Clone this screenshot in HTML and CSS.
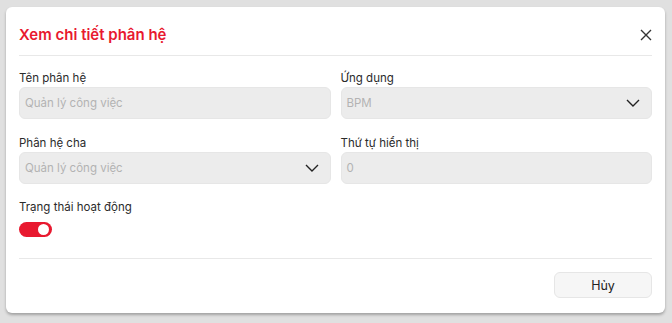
FILE: index.html
```html
<!DOCTYPE html>
<html lang="vi">

<head>
  <meta charset="UTF-8">
  <meta name="viewport" content="width=device-width, initial-scale=1.0">
  <title>Xem chi tiết phân hệ</title>
  <link rel="stylesheet" href="styles.css">
</head>

<body>
  <section class="modal">
    <header class="modal-header">
      <h2 class="modal-title">Xem chi tiết phân hệ</h2>
      <button class="close" aria-label="Đóng">
        <svg width="12" height="12" viewBox="0 0 12 12">
          <path d="M1 1 L11 11 M11 1 L1 11" stroke="#333" stroke-width="1.4" fill="none" />
        </svg>
      </button>
    </header>
    <div class="modal-body">
      <div class="grid">
        <label class="field">
          <span class="field-label">Tên phân hệ</span>
          <span class="input">Quản lý công việc</span>
        </label>
        <label class="field">
          <span class="field-label">Ứng dụng</span>
          <span class="input select">BPM
            <svg width="14" height="8" viewBox="0 0 14 8">
              <path d="M1 1 L7 7 L13 1" stroke="#222" stroke-width="1.4" fill="none" />
            </svg>
          </span>
        </label>
        <label class="field">
          <span class="field-label">Phân hệ cha</span>
          <span class="input select">Quản lý công việc
            <svg width="14" height="8" viewBox="0 0 14 8">
              <path d="M1 1 L7 7 L13 1" stroke="#222" stroke-width="1.4" fill="none" />
            </svg>
          </span>
        </label>
        <label class="field">
          <span class="field-label">Thứ tự hiển thị</span>
          <span class="input">0</span>
        </label>
      </div>
      <div class="status">
        <span class="field-label">Trạng thái hoạt động</span>
        <span class="toggle"><span class="knob"></span></span>
      </div>
    </div>
    <footer class="modal-footer">
      <button class="btn">Hủy</button>
    </footer>
  </section>
</body>

</html>
```
FILE: styles.css
```css
html {
  box-sizing: border-box;
  font-family: Inter, "Noto Sans", sans-serif;
  font-size: 11.5px;
}

*,
*::before,
*::after {
  box-sizing: inherit;
}

body {
  margin: 0;
  padding: 7px 7px 0 6px;
  min-height: 100vh;
  background-color: #e0e0e0;
  color: #2b2b2b;
}

.modal {
  width: 659px;
  background-color: #fff;
  border-radius: 6px;
  box-shadow: 0 2px 3px rgba(0, 0, 0, .28);
  padding: 0 13px 15px;
}

.modal-header {
  display: flex;
  justify-content: space-between;
  align-items: center;
  padding: 16px 0 8px;
  border-bottom: 1px solid #e8e8e8;
}

.modal-title {
  margin: 0;
  font-size: 15px;
  line-height: 24px;
  font-weight: 600;
  color: #e8192f;
}

.close {
  border: 0;
  background: none;
  padding: 0;
  width: 12px;
  height: 12px;
  display: flex;
}

.modal-body {
  padding: 14px 0 21px;
  border-bottom: 1px solid #e8e8e8;
}

.grid {
  display: grid;
  grid-template-columns: 1fr 1fr;
  column-gap: 10px;
  row-gap: 16px;
}

.field {
  display: flex;
  flex-direction: column;
  gap: 1px;
}

.field-label {
  line-height: 16px;
  color: #2b2b2b;
}

.input {
  height: 32px;
  display: flex;
  align-items: center;
  justify-content: space-between;
  padding: 0 11px 0 5px;
  background-color: #ececec;
  border: 1px solid #e6e6e6;
  border-radius: 6px;
  color: #b3b3b3;
  font-size: 11.5px;
}

.status {
  margin-top: 15px;
  display: flex;
  flex-direction: column;
  align-items: flex-start;
  gap: 7px;
}

.toggle {
  width: 33px;
  height: 15px;
  border-radius: 8px;
  background-color: #e8192f;
  display: flex;
  align-items: center;
  justify-content: flex-end;
  padding: 0 3px;
}

.knob {
  width: 11px;
  height: 11px;
  border-radius: 50%;
  background-color: #fff;
}

.modal-footer {
  display: flex;
  justify-content: flex-end;
  padding-top: 13px;
}

.btn {
  width: 98px;
  height: 26px;
  font-family: inherit;
  font-size: 12.5px;
  color: #222;
  background-color: #f6f6f6;
  border: 1px solid #e6e6e6;
  border-radius: 6px;
}
```
